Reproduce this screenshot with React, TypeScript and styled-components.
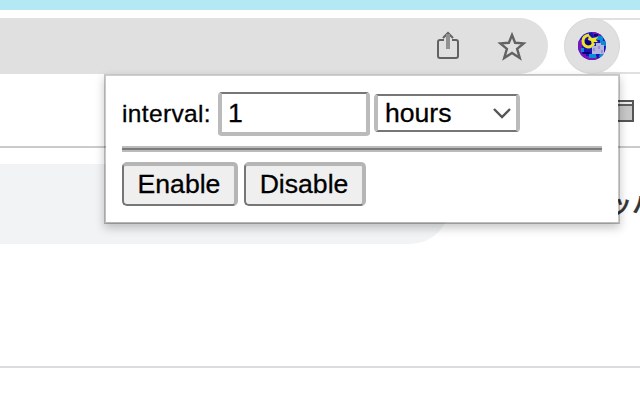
import React from 'react';
import styled, { createGlobalStyle } from 'styled-components';

const Global = createGlobalStyle`
  * { box-sizing: border-box; }
  body { margin: 0; background: #fff; font-family: "Liberation Sans", Arial, sans-serif; }
`;

const Browser = styled.div`
  position: relative;
  display: flex;
  flex-direction: column;
  width: 640px;
  height: 400px;
  overflow: hidden;
  background: #fff;
`;

const TabStrip = styled.div`
  flex: none;
  height: 10px;
  background: #b4e8f2;
`;

const Toolbar = styled.div`
  flex: none;
  display: flex;
  height: 64px;
  padding-top: 8px;
`;

const Omnibox = styled.div`
  display: flex;
  align-items: center;
  justify-content: flex-end;
  gap: 37px;
  width: 548px;
  padding-right: 21px;
  border-radius: 0 28px 28px 0;
  background: #e0e0e0;
`;

const Extensions = styled.div`
  flex: 1;
  margin-left: 16px;
  border: solid #e0e0e0;
  border-width: 2px 0;
  border-radius: 28px 0 0 28px;
`;

const ExtensionButton = styled.div`
  display: grid;
  place-items: center;
  width: 56px;
  height: 56px;
  margin-top: -2px;
  border: 1px solid #d8d8d8;
  border-radius: 50%;
  background: #e0e0e0;
`;

const Bookmarks = styled.div`
  flex: none;
  display: flex;
  justify-content: flex-end;
  height: 74px;
  padding: 26px 6px 0 0;
  border-bottom: 2px solid #cbcbcb;
`;

const Content = styled.div`
  flex: none;
  display: flex;
  justify-content: space-between;
  height: 220px;
  padding-top: 16px;
  border-bottom: 2px solid #dadce0;
`;

const SearchBox = styled.div`
  width: 450px;
  height: 80px;
  border-radius: 0 40px 40px 0;
  background: #f1f3f4;
`;

const PageText = styled.div`
  width: 32px;
  padding-top: 21px;
  white-space: nowrap;
  font: 500 24px/36px "Noto Sans CJK JP", sans-serif;
  -webkit-text-stroke: 0.5px #333;
  color: #333;
`;

const Popup = styled.div`
  position: absolute;
  left: 104px;
  top: 74px;
  width: 516px;
  height: 150px;
  padding: 16px;
  border: 2px solid rgba(0, 0, 0, 0.21);
  border-top-color: rgba(0, 0, 0, 0.19);
  border-bottom-color: rgba(0, 0, 0, 0.25);
  background: #fff;
  background-clip: padding-box;
  box-shadow: 0 4px 9px rgba(0, 0, 0, 0.22);
`;

const Row = styled.div`
  display: flex;
  align-items: flex-start;
  height: 44px;
`;

const Label = styled.label`
  width: 96px;
  line-height: 43px;
  font-size: 24.5px;
  letter-spacing: 0.35px;
  -webkit-text-stroke: 0.3px #000;
  color: #000;
`;

const NumberField = styled.input`
  width: 152px;
  height: 44px;
  margin: 0 4px 0 0;
  padding: 0 6px;
  border: solid #bbb;
  border-width: 2px 4px 4px;
  border-top-color: #767676;
  border-radius: 4px;
  outline: none;
  background: #fff;
  font: 26.6px "Liberation Sans", Arial, sans-serif;
  -webkit-text-stroke: 0.3px #000;
  color: #000;
`;

const SelectWrap = styled.div`
  display: grid;
  align-items: center;
  margin-top: 2px;
  width: 146px;
  height: 38px;
  > * { grid-area: 1 / 1; }
  > svg { justify-self: end; margin-right: 9px; pointer-events: none; }
`;

const UnitSelect = styled.select`
  appearance: none;
  width: 146px;
  height: 38px;
  margin: 0;
  padding: 0 7px;
  border: solid #bbb;
  border-width: 2px 4px;
  border-top-color: #767676;
  border-bottom-color: #767676;
  border-radius: 4px;
  background: #fff;
  font: 26.6px/32px "Liberation Sans", Arial, sans-serif;
  -webkit-text-stroke: 0.3px #000;
  color: #000;
`;

const Divider = styled.hr`
  height: 6px;
  margin: 10px 0;
  border: solid #bbb;
  border-width: 2px 0;
  background: #7b7b7b;
`;

const Buttons = styled(Row)`
  gap: 6px;
`;

const Button = styled.button<{ $width: number }>`
  width: ${(p) => p.$width}px;
  height: 44px;
  margin: 0;
  padding: 0 0 2px;
  border: solid #b5b5b5;
  border-width: 4px 4px 2px 2px;
  border-bottom-color: #767676;
  border-left-color: #767676;
  border-radius: 5px;
  background: #efefef;
  font: 26.6px/36px "Liberation Sans", Arial, sans-serif;
  -webkit-text-stroke: 0.3px #000;
  color: #000;
`;

const ShareIcon = () => (
  <svg width="24" height="30" viewBox="0 0 24 30" fill="none" stroke="#626262" strokeWidth="2">
    <path d="M8 9H4Q2 9 2 11V25Q2 27 4 27H20Q22 27 22 25V11Q22 9 20 9H16" />
    <path d="M7 7L12 2L17 7" />
    <path d="M12 3V18" stroke="#929292" strokeWidth="4" />
  </svg>
);

const StarIcon = () => (
  <svg width="30" height="30" viewBox="0 0 30 30" fill="none" stroke="#626262" strokeWidth="2.4">
    <path d="M15 4L18.1 11.8L26.6 12.4L20.1 17.8L22.8 27L15 22L7.2 27L9.9 17.8L3.4 12.4L11.9 11.8Z" />
  </svg>
);

const MoonIcon = () => (
  <svg width="28" height="28" viewBox="0 0 28 28">
    <defs>
      <clipPath id="disc"><circle cx="14" cy="14" r="14" /></clipPath>
    </defs>
    <g clipPath="url(#disc)">
      <path fill="#1814b8" d="M0 0H28V28H0Z" />
      <path fill="#7815bc" d="M0 8H4V22H8V26H2L0 20ZM14 0H24V4H16ZM8 24H19V28H8Z" />
      <path fill="#098ed4" d="M19 4H25V9H28V14H22V8H19ZM3 16H6V20H3ZM11 22H18V26H11ZM22 21H26V25H21Z" />
      <path fill="#100077" d="M7 8H13V16H7ZM5 20H12V22H5ZM16 2H20V4H16Z" />
      <path d="M11 3Q5 4 5 9Q5 14 10 15Q14 15 16 11" fill="none" stroke="#eee32c" strokeWidth="3" />
      <path fill="#ebe52c" d="M11 3L14 6L20 5L18 8L20 10L16 10L14 13L13 9L10 8Z" />
      <path fill="#b7b5df" d="M14 14H18V11H23V13H26V22H14Z" />
      <path fill="#9692d6" d="M15 16H17V19H15ZM20 14H22V17H20ZM23 18H25V21H23Z" />
    </g>
  </svg>
);

const FolderIcon = () => (
  <svg width="22" height="22" viewBox="0 0 22 22">
    <path d="M1 1H21V21H1Z" fill="#c8c8c8" stroke="#555" strokeWidth="2" />
    <path d="M2 2H20V4H2Z" fill="#eee" />
    <path d="M2 5H20" stroke="#606060" strokeWidth="2" />
  </svg>
);

export default function App() {
  return (
    <>
      <Global />
      <Browser>
        <TabStrip />
        <Toolbar>
          <Omnibox>
            <ShareIcon />
            <StarIcon />
          </Omnibox>
          <Extensions>
            <ExtensionButton><MoonIcon /></ExtensionButton>
          </Extensions>
        </Toolbar>
        <Bookmarks><FolderIcon /></Bookmarks>
        <Content>
          <SearchBox />
          <PageText>ッハ</PageText>
        </Content>
        <Popup>
          <Row>
            <Label htmlFor="interval">interval:</Label>
            <NumberField id="interval" defaultValue="1" />
            <SelectWrap>
              <UnitSelect defaultValue="hours">
                <option value="hours">hours</option>
              </UnitSelect>
              <svg width="18" height="12" viewBox="0 0 18 12" fill="none" stroke="#555" strokeWidth="2.4">
                <path d="M1 2L9 10L17 2" />
              </svg>
            </SelectWrap>
          </Row>
          <Divider />
          <Buttons>
            <Button $width={116}>Enable</Button>
            <Button $width={122}>Disable</Button>
          </Buttons>
        </Popup>
      </Browser>
    </>
  );
}
